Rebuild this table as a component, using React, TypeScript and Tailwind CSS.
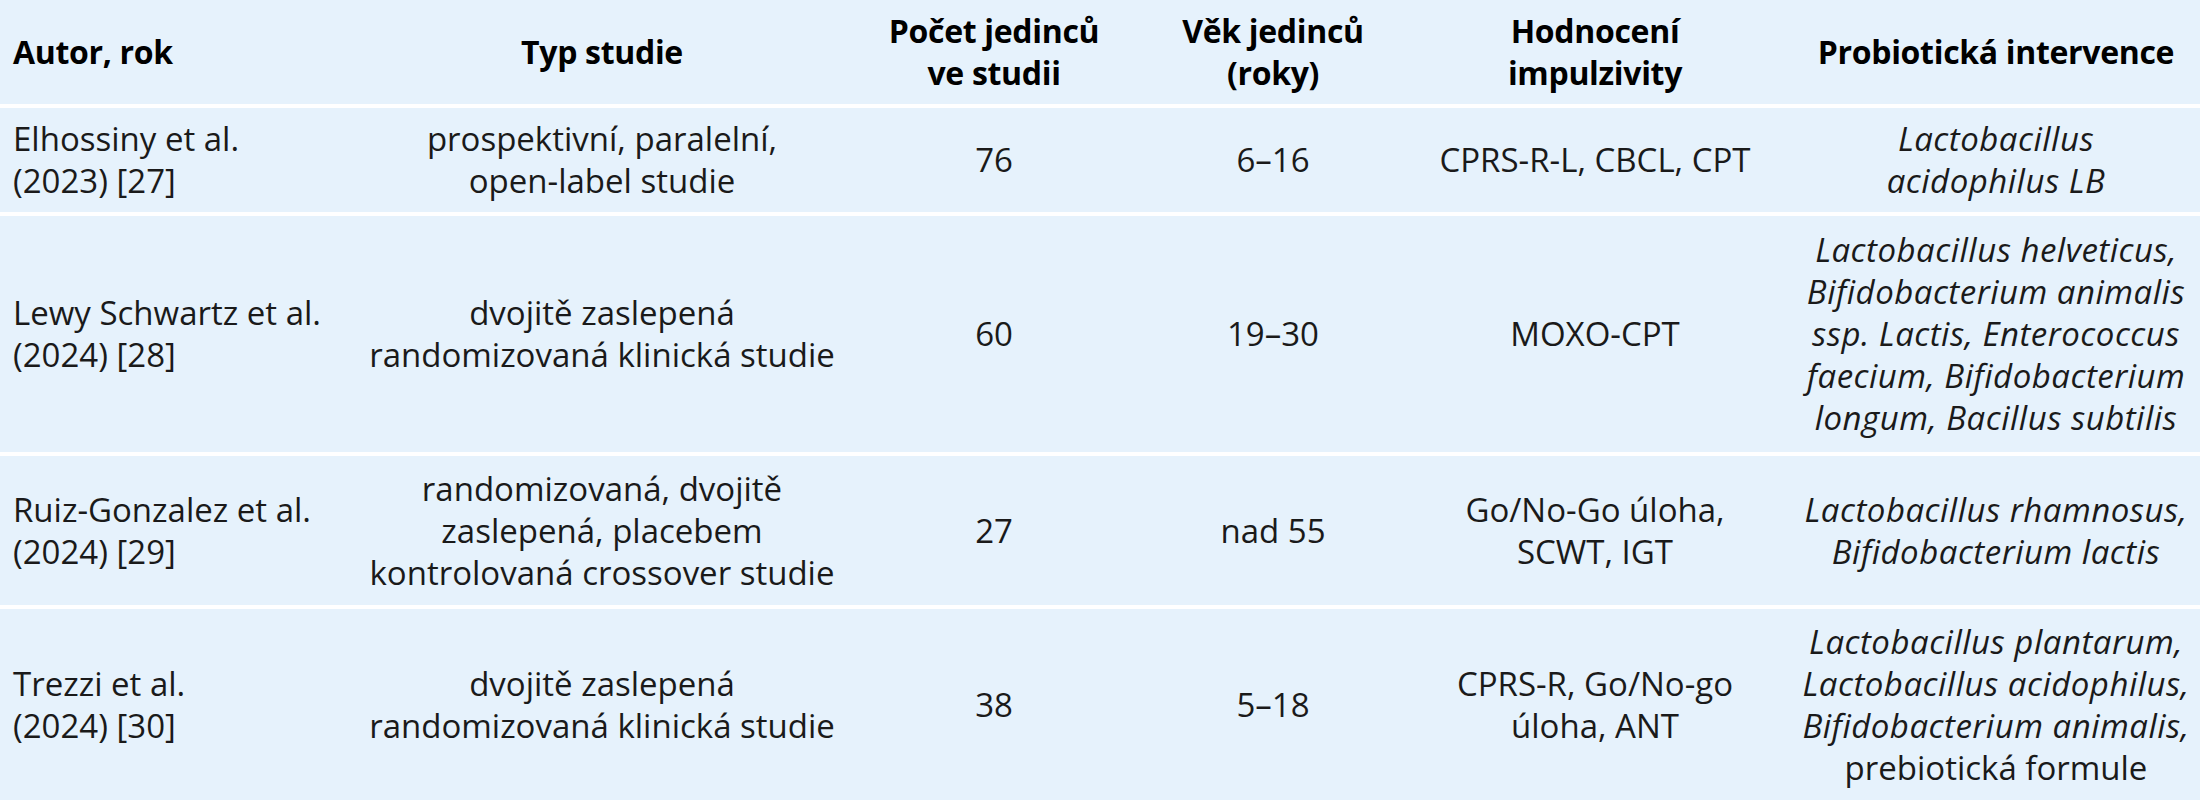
type Piece = { text: string; italic?: boolean };
type Cell = Piece[];

const it = (text: string): Piece => ({ text, italic: true });
const rm = (text: string): Piece => ({ text });

const grid = "grid grid-cols-[364px_476px_308px_250px_394px_408px]";

const header = [
  ["Autor, rok"],
  ["Typ studie"],
  ["Počet jedinců", "ve studii"],
  ["Věk jedinců", "(roky)"],
  ["Hodnocení", "impulzivity"],
  ["Probiotická intervence"],
];

const rows: { height: string; cells: Cell[] }[] = [
  {
    height: "h-[108px]",
    cells: [
      [rm("Elhossiny et al."), rm("(2023) [27]")],
      [rm("prospektivní, paralelní,"), rm("open-label studie")],
      [rm("76")],
      [rm("6–16")],
      [rm("CPRS-R-L, CBCL, CPT")],
      [it("Lactobacillus"), it("acidophilus LB")],
    ],
  },
  {
    height: "h-[240px]",
    cells: [
      [rm("Lewy Schwartz et al."), rm("(2024) [28]")],
      [rm("dvojitě zaslepená"), rm("randomizovaná klinická studie")],
      [rm("60")],
      [rm("19–30")],
      [rm("MOXO-CPT")],
      [
        it("Lactobacillus helveticus,"),
        it("Bifidobacterium animalis"),
        it("ssp. Lactis, Enterococcus"),
        it("faecium, Bifidobacterium"),
        it("longum, Bacillus subtilis"),
      ],
    ],
  },
  {
    height: "h-[153px]",
    cells: [
      [rm("Ruiz-Gonzalez et al."), rm("(2024) [29]")],
      [rm("randomizovaná, dvojitě"), rm("zaslepená, placebem"), rm("kontrolovaná crossover studie")],
      [rm("27")],
      [rm("nad 55")],
      [rm("Go/No-Go úloha,"), rm("SCWT, IGT")],
      [it("Lactobacillus rhamnosus,"), it("Bifidobacterium lactis")],
    ],
  },
  {
    height: "flex-1",
    cells: [
      [rm("Trezzi et al."), rm("(2024) [30]")],
      [rm("dvojitě zaslepená"), rm("randomizovaná klinická studie")],
      [rm("38")],
      [rm("5–18")],
      [rm("CPRS-R, Go/No-go"), rm("úloha, ANT")],
      [
        it("Lactobacillus plantarum,"),
        it("Lactobacillus acidophilus,"),
        it("Bifidobacterium animalis,"),
        rm("prebiotická formule"),
      ],
    ],
  },
];

export default function App() {
  return (
    <div className="flex h-[800px] w-[2200px] flex-col overflow-hidden bg-[#e6f2fc] font-['Open_Sans','Noto_Sans',sans-serif] text-[33px] leading-[42px] text-[#1a1a1a]">
      {/* header */}
      <div className={`${grid} h-[104px] shrink-0`}>
        {header.map((lines, i) => (
          <div
            key={i}
            className={`flex flex-col justify-center whitespace-nowrap text-[32px] font-bold tracking-[-0.01em] text-black ${
              i === 0 ? "items-start pl-[13px]" : "items-center text-center"
            }`}
          >
            {lines.map((l) => (
              <span key={l}>{l}</span>
            ))}
          </div>
        ))}
      </div>

      {rows.map((row, r) => (
        <div key={r} className={`${grid} ${row.height} shrink-0 border-t-4 border-white`}>
          {row.cells.map((cell, c) => (
            <div
              key={c}
              className={`flex flex-col justify-center whitespace-nowrap ${
                c === 0 ? "items-start pl-[13px]" : "items-center text-center"
              }`}
            >
              {cell.map((p, k) => (
                <span key={k} className={p.italic ? "italic tracking-[0.015em]" : ""}>
                  {p.text}
                </span>
              ))}
            </div>
          ))}
        </div>
      ))}
    </div>
  );
}
